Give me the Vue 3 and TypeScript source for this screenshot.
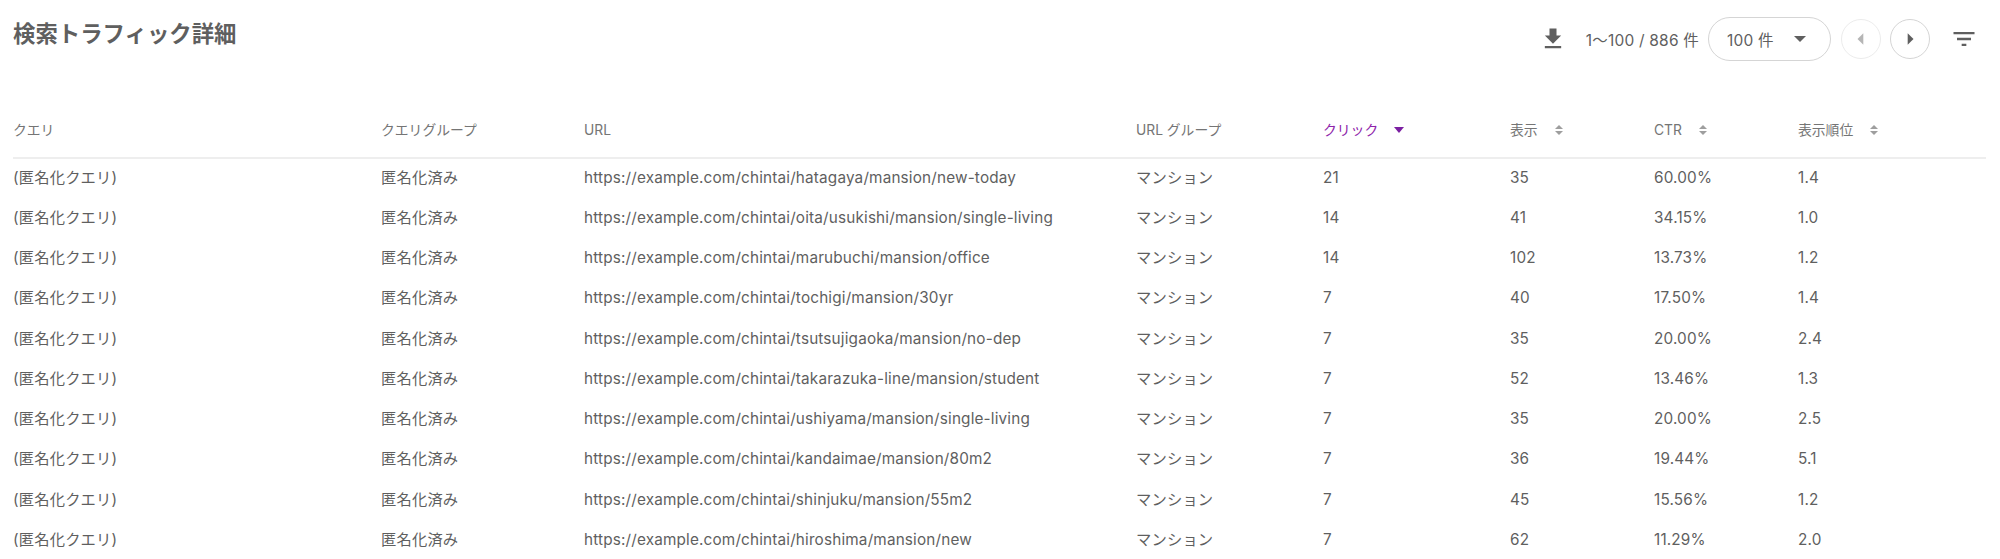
<script setup lang="ts">
interface Row { url: string; clicks: number; views: number; ctr: string; pos: string }
const rows: Row[] = [
  { url: 'hatagaya/mansion/new-today', clicks: 21, views: 35, ctr: '60.00%', pos: '1.4' },
  { url: 'oita/usukishi/mansion/single-living', clicks: 14, views: 41, ctr: '34.15%', pos: '1.0' },
  { url: 'marubuchi/mansion/office', clicks: 14, views: 102, ctr: '13.73%', pos: '1.2' },
  { url: 'tochigi/mansion/30yr', clicks: 7, views: 40, ctr: '17.50%', pos: '1.4' },
  { url: 'tsutsujigaoka/mansion/no-dep', clicks: 7, views: 35, ctr: '20.00%', pos: '2.4' },
  { url: 'takarazuka-line/mansion/student', clicks: 7, views: 52, ctr: '13.46%', pos: '1.3' },
  { url: 'ushiyama/mansion/single-living', clicks: 7, views: 35, ctr: '20.00%', pos: '2.5' },
  { url: 'kandaimae/mansion/80m2', clicks: 7, views: 36, ctr: '19.44%', pos: '5.1' },
  { url: 'shinjuku/mansion/55m2', clicks: 7, views: 45, ctr: '15.56%', pos: '1.2' },
  { url: 'hiroshima/mansion/new', clicks: 7, views: 62, ctr: '11.29%', pos: '2.0' },
]
const sortable = ['表示', 'CTR', '表示順位']
</script>

<template>
  <div class="page">
    <header class="top">
      <h1 class="title">検索トラフィック詳細</h1>
      <div class="tools">
        <svg class="dl" width="28" height="28" viewBox="0 0 24 24"><path d="M19 9h-4V3H9v6H5l7 7 7-7zM5 18v2h14v-2H5z" /></svg>
        <span class="range">1〜100 / 886 件</span>
        <div class="select"><span>100 件</span><i class="caret"></i></div>
        <button class="round off"><svg width="28" height="28" viewBox="0 0 24 24"><path d="M14 7l-5 5 5 5z" /></svg></button>
        <button class="round next"><svg width="28" height="28" viewBox="0 0 24 24"><path d="M10 17l5-5-5-5z" /></svg></button>
        <svg class="filter" width="28" height="28" viewBox="0 0 24 24"><path d="M10 18h4v-2h-4v2zM3 6v2h18V6H3zm3 7h12v-2H6v2z" /></svg>
      </div>
    </header>
    <table class="grid">
      <colgroup>
        <col class="c1" /><col class="c2" /><col class="c3" /><col class="c4" />
        <col class="c5" /><col class="c6" /><col class="c7" /><col />
      </colgroup>
      <thead>
        <tr>
          <th>クエリ</th>
          <th>クエリグループ</th>
          <th>URL</th>
          <th>URL グループ</th>
          <th class="active"><span class="head">クリック<i class="down"></i></span></th>
          <th v-for="h in sortable" :key="h"><span class="head">{{ h }}<span class="sort"><i></i><i></i></span></span></th>
        </tr>
      </thead>
      <tbody>
        <tr v-for="r in rows" :key="r.url">
          <td>(匿名化クエリ)</td>
          <td>匿名化済み</td>
          <td>https://example.com/chintai/{{ r.url }}</td>
          <td>マンション</td>
          <td>{{ r.clicks }}</td>
          <td>{{ r.views }}</td>
          <td>{{ r.ctr }}</td>
          <td>{{ r.pos }}</td>
        </tr>
      </tbody>
    </table>
  </div>
</template>

<style>
html, body { margin: 0; background: #fff; overflow: hidden; }
</style>

<style scoped>
.page {
  width: 2000px;
  height: 559px;
  overflow: hidden;
  box-sizing: border-box;
  padding: 0 14px 0 13px;
  font-family: Inter, "Noto Sans CJK JP", sans-serif;
  color: #5f5f5f;
}
.top { display: flex; justify-content: space-between; align-items: flex-start; height: 103px; }
.title { margin: 19px 0 0; font-size: 22.4px; line-height: 30px; font-weight: 700; color: #5f5f5f; }
.tools { display: flex; align-items: center; margin-top: 16px; margin-right: 8px; height: 46px; }
.tools svg { fill: #5f5f5f; display: block; }
.dl { margin-right: 19px; }
.range { font-size: 15.5px; letter-spacing: 0.2px; margin-right: 9px; }
.select {
  width: 123px; height: 44px; box-sizing: border-box; border: 1px solid #d5d5d5; border-radius: 22px;
  display: flex; align-items: center; justify-content: space-between; padding: 0 24px 0 18px;
  font-size: 15.5px; letter-spacing: 0.2px;
}
.caret { width: 0; height: 0; border: 6px solid transparent; border-top-color: #5f5f5f; border-bottom: 0; }
.round {
  width: 40px; height: 40px; padding: 0; border-radius: 50%; border: 1px solid #d5d5d5; background: #fff;
  display: flex; align-items: center; justify-content: center; margin-left: 10px;
}
.round.next { margin-left: 9px; }
.round.off { border-color: #ececec; }
.round.off svg { fill: #b5b5b5; }
.filter { margin-left: 20px; }
.grid { width: 1973px; border-collapse: collapse; table-layout: fixed; }
.c1 { width: 368px; } .c2 { width: 203px; } .c3 { width: 552px; } .c4 { width: 187px; }
.c5 { width: 187px; } .c6 { width: 144px; } .c7 { width: 144px; }
th {
  height: 55px; padding: 0; text-align: left; font-weight: 400; font-size: 13.8px; line-height: 18px; color: #757575;
  border-bottom: 2px solid #eeeeee; box-sizing: border-box;
}
th.active { color: #8e24aa; }
.head { display: inline-flex; align-items: center; }
td { height: 40.25px; padding: 0 0 1px; box-sizing: border-box; font-size: 15.3px; line-height: 20px; letter-spacing: 0.17px; color: #5f5f5f; white-space: nowrap; }
.down {
  display: block; width: 0; height: 0; margin-left: 16px;
  border: 5px solid transparent; border-top: 6px solid #7b1fa2; border-bottom: 0;
}
.sort { display: flex; flex-direction: column; gap: 2px; margin-left: 17px; }
.sort i { display: block; width: 0; height: 0; border: 4px solid transparent; }
.sort i:first-child { border-bottom: 4px solid #9e9e9e; border-top: 0; }
.sort i:last-child { border-top: 4px solid #9e9e9e; border-bottom: 0; }
</style>
